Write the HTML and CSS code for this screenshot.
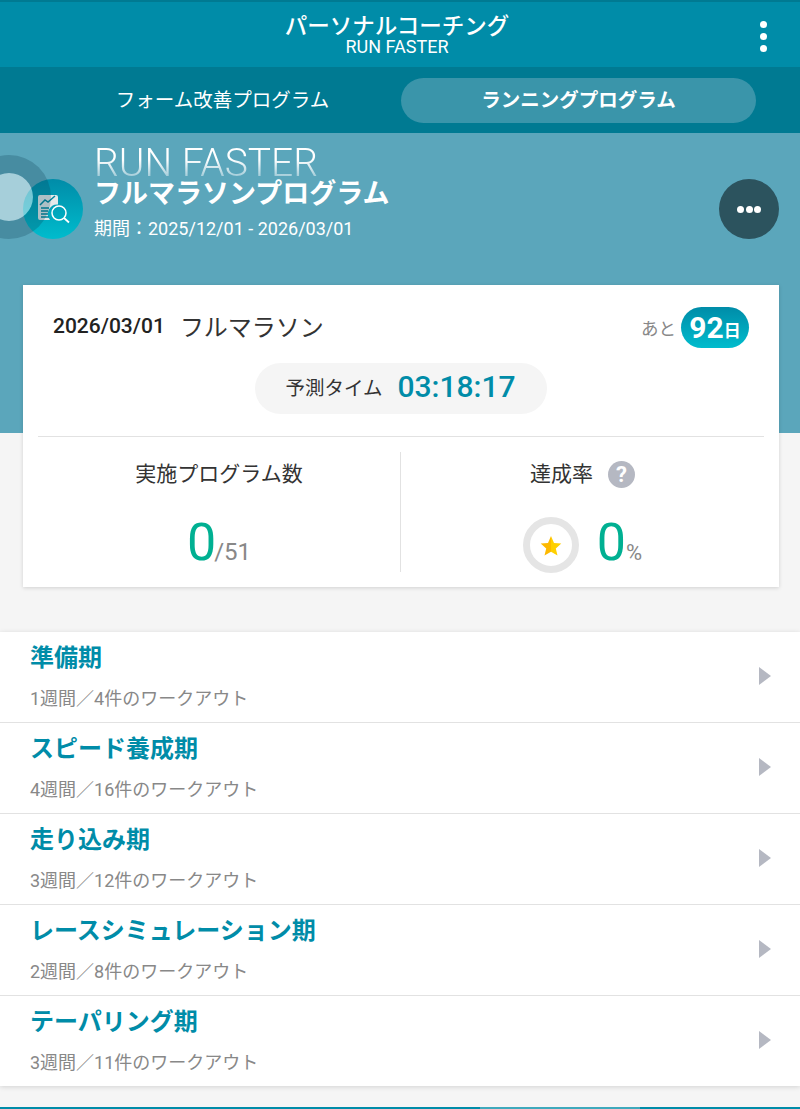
FILE: index.html
```html
<!DOCTYPE html>
<html lang="ja">
<head>
    <meta charset="UTF-8">
    <meta name="viewport" content="width=device-width, initial-scale=1.0">
    <title>パーソナルコーチング</title>
    <link rel="stylesheet" href="styles.css">
</head>
<body>
    <header class="topbar">
        <div class="topbar-title">
            <div class="topbar-main">パーソナルコーチング</div>
            <div class="topbar-sub">RUN FASTER</div>
        </div>
        <div class="kebab"><span></span><span></span><span></span></div>
    </header>

    <nav class="tabs">
        <div class="tab">フォーム改善プログラム</div>
        <div class="tab tab-active">ランニングプログラム</div>
    </nav>

    <section class="hero">
        <div class="hero-row">
            <div class="hero-icon">
                <div class="badge">
                    <svg width="38" height="38" viewBox="0 0 38 38">
                        <path d="M4 7a2 2 0 0 1 2-2h16a2 2 0 0 1 2 2v7.500a9.500 9.500 0 0 0-8 15.500H6a2 2 0 0 1-2-2z" fill="#e3e9ea"/>
                        <path d="M6 15l5-5 3 2 7-6" fill="none" stroke="#00879f" stroke-width="1.5"/>
                        <path d="M7 18h8M7 21h7M7 24h7M7 27h8" stroke="#00879f" stroke-width="1.6"/>
                        <circle cx="25" cy="23" r="7" fill="none" stroke="#fff" stroke-width="1.5"/>
                        <path d="M30 28l5 4.500" stroke="#fff" stroke-width="1.8"/>
                    </svg>
                </div>
                <div class="ring"></div>
            </div>
            <div class="hero-text">
                <div class="hero-en">RUN FASTER</div>
                <div class="hero-ja">フルマラソンプログラム</div>
                <div class="hero-date">期間：2025/12/01 - 2026/03/01</div>
            </div>
            <div class="more"><span></span><span></span><span></span></div>
        </div>
    </section>

    <section class="card">
        <div class="race">
            <span class="race-date">2026/03/01</span>
            <span class="race-name">フルマラソン</span>
            <span class="race-left">あと</span>
            <span class="days"><b>92</b><i>日</i></span>
        </div>
        <div class="predict-wrap">
            <div class="predict">
                <span class="predict-label">予測タイム</span>
                <span class="predict-time">03:18:17</span>
            </div>
        </div>
        <div class="stats">
            <div class="stat">
                <div class="stat-label">実施プログラム数</div>
                <div class="stat-value"><span class="big">0</span><span class="unit">/51</span></div>
            </div>
            <div class="stat">
                <div class="stat-label">達成率<span class="help">?</span></div>
                <div class="stat-value">
                    <div class="star-ring">
                        <svg width="22" height="22" viewBox="0 0 22 22">
                            <path d="M11 1l3 7 7.300.6-5.500 4.800 1.700 7.200L11 16.800z" fill="#ffd000"/>
                            <path d="M11 1L8 8 .7 8.600l5.500 4.800-1.700 7.200L11 16.800z" fill="#fdb900"/>
                        </svg>
                    </div>
                    <span class="big">0</span><span class="unit pct">%</span>
                </div>
            </div>
        </div>
    </section>

    <section class="phases">
        <div class="phase">
            <div class="phase-name">準備期</div>
            <div class="phase-sub">1週間／4件のワークアウト</div>
            <div class="arrow"></div>
        </div>
        <div class="phase">
            <div class="phase-name">スピード養成期</div>
            <div class="phase-sub">4週間／16件のワークアウト</div>
            <div class="arrow"></div>
        </div>
        <div class="phase">
            <div class="phase-name">走り込み期</div>
            <div class="phase-sub">3週間／12件のワークアウト</div>
            <div class="arrow"></div>
        </div>
        <div class="phase">
            <div class="phase-name">レースシミュレーション期</div>
            <div class="phase-sub">2週間／8件のワークアウト</div>
            <div class="arrow"></div>
        </div>
        <div class="phase">
            <div class="phase-name">テーパリング期</div>
            <div class="phase-sub">3週間／11件のワークアウト</div>
            <div class="arrow"></div>
        </div>
    </section>

    <footer class="bottom-line"><span></span></footer>
</body>
</html>
```

FILE: styles.css
```css
* {
    box-sizing: border-box;
}
html, body {
    height: 1109px;
    overflow: hidden;
}
body {
    margin: 0;
    background-color: #f5f5f5;
    font-family: Roboto, "Noto Sans CJK JP", sans-serif;
    color: #333;
    display: flex;
    flex-direction: column;
}

/* top bar */
.topbar {
    height: 67px;
    background-color: #008ca8;
    border-top: 2px solid #007a92;
    display: flex;
    align-items: center;
    justify-content: center;
    padding-right: 6px;
    color: #fff;
    text-align: center;
    position: relative;
    flex-shrink: 0;
}
.topbar-main {
    font-size: 22.500px;
    font-weight: 500;
    line-height: 26px;
    margin-top: -1px;
}
.topbar-sub {
    font-size: 18px;
    line-height: 16px;
}
.kebab {
    position: absolute;
    right: 33px;
    top: 19px;
    display: flex;
    flex-direction: column;
    gap: 5px;
}
.kebab span {
    width: 7px;
    height: 7px;
    border-radius: 50%;
    background-color: #fff;
}

/* tabs */
.tabs {
    height: 66px;
    background-color: #007a92;
    display: flex;
    padding: 11px 44px 10px;
    color: #fff;
    font-size: 19.500px;
    flex-shrink: 0;
}
.tab {
    flex: 1;
    display: flex;
    align-items: center;
    justify-content: center;
    border-radius: 23px;
    padding-bottom: 4px;
}
.tabs .tab:first-child {
    flex: 0 0 357px;
}
.tab-active {
    background-color: #3a95aa;
    font-weight: 700;
}

/* hero */
.hero {
    height: 300px;
    background-color: #5ba6bb;
    color: #fff;
    padding-top: 12px;
    flex-shrink: 0;
}
.hero-row {
    display: flex;
    align-items: flex-start;
}
.hero-icon {
    width: 95px;
    height: 100px;
    position: relative;
    flex-shrink: 0;
}
.ring {
    position: absolute;
    left: -33px;
    top: 10px;
    width: 84px;
    height: 84px;
    border-radius: 50%;
    background-color: rgba(255, 255, 255, 0.46);
    background-clip: padding-box;
    border: 18px solid rgba(10, 60, 80, 0.24);
}
.badge {
    position: absolute;
    left: 23px;
    top: 34px;
    width: 60px;
    height: 60px;
    border-radius: 50%;
    background: linear-gradient(to bottom, #008ca8, #00bccd);
    display: flex;
    align-items: center;
    justify-content: center;
}
.hero-text {
    flex: 1;
    margin-left: -1px;
}
.hero-en {
    font-size: 39px;
    font-weight: 300;
    line-height: 34px;
    margin-top: 1px;
    background: linear-gradient(to bottom, #fff 40%, #8fc2d1 100%);
    -webkit-background-clip: text;
    background-clip: text;
    color: transparent;
}
.hero-ja {
    font-size: 27px;
    font-weight: 700;
    line-height: 29px;
}
.hero-date {
    font-size: 18px;
    line-height: 22px;
    margin-top: 9px;
}
.more {
    width: 60px;
    height: 60px;
    margin: 34px 21px 0 0;
    border-radius: 50%;
    background-color: #2c535e;
    display: flex;
    align-items: center;
    justify-content: center;
    gap: 1.500px;
}
.more span {
    width: 7px;
    height: 7px;
    border-radius: 50%;
    background-color: #fff;
}

/* card */
.card {
    height: 302px;
    margin: -148px 21px 0 23px;
    background-color: #fff;
    box-shadow: 0 1px 4px rgba(0, 0, 0, 0.15);
    position: relative;
    flex-shrink: 0;
    padding: 22px 15px 0;
}
.race {
    display: flex;
    align-items: center;
    height: 40px;
    padding: 0 15px;
}
.race-date {
    font-size: 21px;
    font-weight: 500;
    color: #222;
    margin: -2px 15px 0 0;
}
.race-name {
    font-size: 24px;
    margin-top: -3px;
}
.race-left {
    margin-left: auto;
    font-size: 17.500px;
    color: #888;
    margin-right: 5px;
}
.days {
    height: 41px;
    width: 68px;
    border-radius: 21px;
    background: linear-gradient(to bottom, #008ca8, #00bccd);
    color: #fff;
    display: flex;
    align-items: center;
    justify-content: center;
}
.days b {
    font-size: 30px;
    font-weight: 700;
}
.days i {
    font-style: normal;
    font-weight: 700;
    font-size: 17px;
    margin-top: 5px;
}
.predict-wrap {
    display: flex;
    justify-content: center;
    margin: 16px 1px 0 0;
}
.predict {
    width: 292px;
    height: 51px;
    border-radius: 26px;
    background-color: #f5f5f5;
    display: flex;
    align-items: center;
    justify-content: center;
    gap: 15px;
    padding-bottom: 4px;
}
.predict-label {
    font-size: 19.500px;
}
.predict-time {
    font-size: 30px;
    font-weight: 500;
    color: #008ca8;
}
.stats {
    display: flex;
    margin-top: 22px;
    border-top: 1px solid #e2e2e2;
    padding-top: 15px;
}
.stat {
    flex: 1;
    height: 120px;
    text-align: center;
}
.stats .stat:first-child {
    flex: 0 0 363px;
    border-right: 1px solid #e2e2e2;
}
.stat-label {
    font-size: 21px;
    line-height: 44px;
    display: flex;
    align-items: center;
    justify-content: center;
    height: 44px;
}
.help {
    width: 27px;
    height: 27px;
    margin-left: 15px;
    border-radius: 50%;
    background-color: #b5b8c2;
    color: #fff;
    font-size: 22px;
    font-weight: 700;
    line-height: 27px;
}
.stat-value {
    display: flex;
    align-items: baseline;
    justify-content: center;
    margin-top: 16px;
    height: 56px;
}
.big {
    font-size: 52px;
    color: #00b092;
}
.unit {
    font-size: 24px;
    color: #888;
    margin-left: -2px;
}
.unit.pct {
    font-size: 22px;
    margin-left: 0;
}
.star-ring {
    width: 56px;
    height: 56px;
    border-radius: 50%;
    border: 7px solid #e5e5e5;
    display: flex;
    align-items: center;
    justify-content: center;
    align-self: center;
    margin: 10px 18px 0 0;
    padding-top: 1px;
}

/* phase list */
.phases {
    margin-top: 45px;
    background-color: #fff;
    box-shadow: 0 1px 5px rgba(0, 0, 0, 0.14);
    flex-shrink: 0;
}
.phase {
    height: 91px;
    padding: 8px 30px 0;
    border-bottom: 1px solid #e2e2e2;
    position: relative;
}
.phase:last-child {
    height: 90px;
    border-bottom: none;
}
.phase-name {
    font-size: 24px;
    font-weight: 700;
    line-height: 36px;
    color: #008ca8;
}
.phase-sub {
    font-size: 18px;
    line-height: 24px;
    margin-top: 11px;
    color: #888;
}
.arrow {
    position: absolute;
    right: 29px;
    top: 35px;
    border-left: 12px solid #b5b8c2;
    border-top: 9px solid transparent;
    border-bottom: 9px solid transparent;
}

/* bottom edge */
.bottom-line {
    margin-top: auto;
    height: 2px;
    background-color: #008ca8;
    display: flex;
    padding-left: 480px;
    flex-shrink: 0;
}
.bottom-line span {
    width: 160px;
    background-color: #3fa9bc;
}
```
